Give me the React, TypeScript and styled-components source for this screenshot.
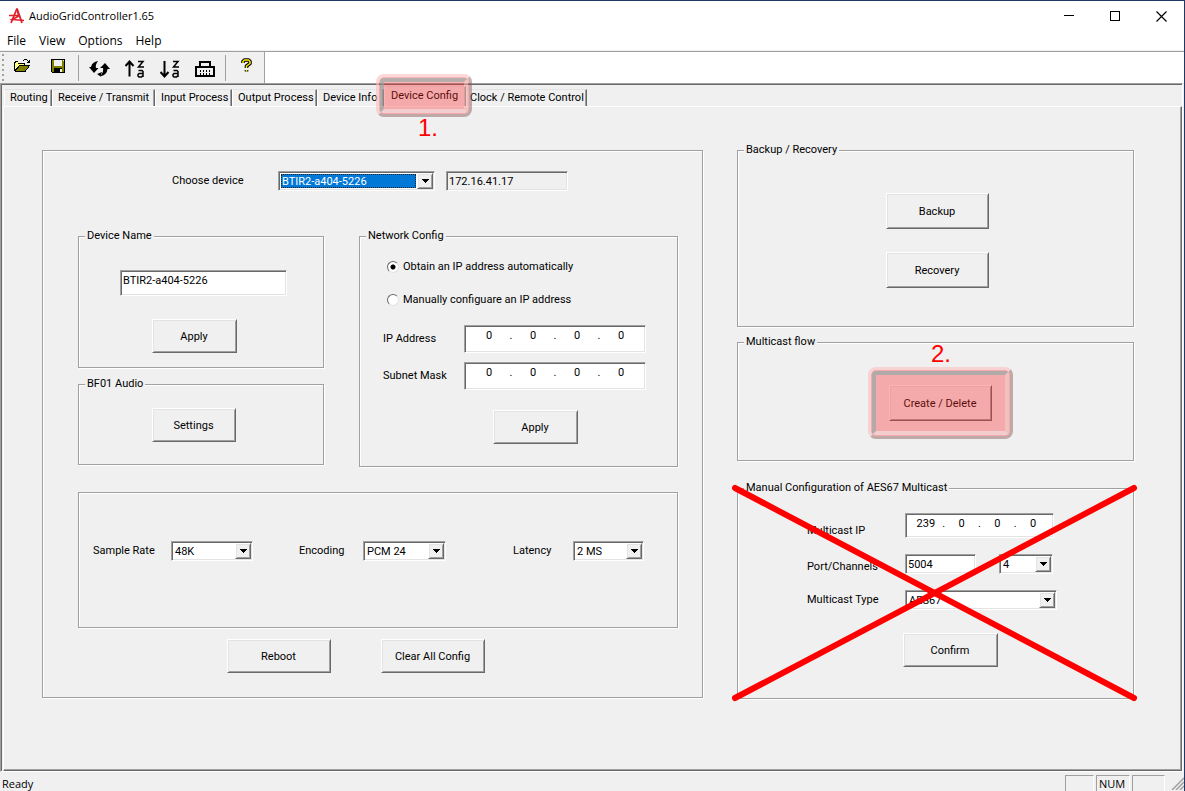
import React from "react";
import styled, { createGlobalStyle, css } from "styled-components";

const FACE = "#f0f0f0";
const SHADOW = "#a0a0a0";
const DARK = "#696969";
const LIGHT = "#e3e3e3";

const GlobalStyle = createGlobalStyle`
  *, *::before, *::after { box-sizing: border-box; }
  body {
    margin: 0;
    background: ${FACE};
    color: #000;
    font: 11px/14px Roboto, "Liberation Sans", Arial, sans-serif;
  }
  button, input, select { font: inherit; color: inherit; margin: 0; }
`;

const raised = css`
  border: 1px solid;
  border-color: #fff ${DARK} ${DARK} #fff;
  box-shadow: inset 1px 1px 0 ${LIGHT}, inset -1px -1px 0 ${SHADOW};
`;

const sunken = css`
  border: 1px solid;
  border-color: ${SHADOW} #fff #fff ${SHADOW};
  box-shadow: inset 1px 1px 0 ${DARK}, inset -1px -1px 0 ${LIGHT};
`;

const etched = css`
  border: 1px solid ${SHADOW};
  box-shadow: inset 1px 1px 0 #fff, 1px 1px 0 #fff;
`;

/* ---------- window chrome ---------- */

const Window = styled.div`
  display: flex;
  flex-direction: column;
  min-height: 100vh;
  border-top: 1px solid #1f3864;
  border-right: 1px solid #1f3864;
  background: ${FACE};
`;

const TitleBar = styled.header`
  display: flex;
  align-items: center;
  height: 30px;
  padding-left: 8px;
  background: #fff;
  font: 11px/16px "Open Sans", "Noto Sans", sans-serif;
`;

const Title = styled.h1`
  flex: 1;
  margin: 0 0 0 4px;
  font: inherit;
`;

const CaptionButton = styled.button`
  display: grid;
  place-items: center;
  width: 46px;
  height: 30px;
  padding: 0;
  border: 0;
  background: none;
`;

const MenuBar = styled.nav`
  display: flex;
  height: 20px;
  background: #fff;
  border-bottom: 1px solid ${FACE};
  font: 12px/20px "Open Sans", "Noto Sans", sans-serif;
`;

const MenuItem = styled.button`
  padding: 0 6px 0 7px;
  border: 0;
  background: none;
`;

const ToolBarRow = styled.div`
  display: flex;
  height: 32px;
  background: #fff;
  border-top: 1px solid ${SHADOW};
`;

const ToolBar = styled.div`
  display: flex;
  align-items: center;
  padding: 0 0 0 2px;
  background: ${FACE};
  border-right: 1px solid ${SHADOW};
`;

const Grip = styled.span`
  width: 2px;
  height: 28px;
  margin-right: 1px;
  background: repeating-linear-gradient(${SHADOW} 0 2px, transparent 2px 5px);
`;

const ToolButton = styled.button`
  display: grid;
  place-items: center;
  width: 35px;
  height: 28px;
  padding: 0 0 4px;
  border: 0;
  background: none;
`;

const WideTool = styled(ToolButton)`
  padding: 2px 0 0;
`;

const Separator = styled.span`
  width: 1px;
  height: 26px;
  margin: 0 3px;
  background: ${SHADOW};
`;

/* ---------- tabs ---------- */

const Client = styled.main`
  flex: 1;
  display: flex;
  flex-direction: column;
  border: 1px solid;
  border-color: ${SHADOW} #fff #fff ${SHADOW};
  box-shadow: inset 1px 1px 0 ${DARK};
  padding: 2px 0 0 2px;
  margin-right: 1px;
`;

const TabStrip = styled.div`
  display: flex;
  align-items: flex-end;
  height: 20px;
  padding-left: 1px;
`;

const Tab = styled.button<{ $w: number; $on?: boolean }>`
  position: relative;
  width: ${(p) => p.$w}px;
  height: ${(p) => (p.$on ? 20 : 17)}px;
  padding: ${(p) => (p.$on ? "0 0 2px 6px" : "0 0 0 5px")};
  border: 0;
  border-left: 1px solid #fff;
  border-top: 1px solid ${LIGHT};
  border-right: 1px solid ${DARK};
  box-shadow: inset -1px 0 0 ${SHADOW};
  background: ${FACE};
  text-align: left;
  white-space: nowrap;
`;

const LastTab = styled(Tab)`
  padding-left: 3px;
`;

const Page = styled.section`
  flex: 1;
  display: grid;
  grid-template-columns: 661fr 397fr;
  align-items: start;
  gap: 34px;
  padding: 36px 47px 60px 38px;
  border: 1px solid;
  border-color: #fff ${DARK} ${DARK} #fff;
  box-shadow: inset -1px -1px 0 ${SHADOW};
`;

const Column = styled.div<{ $gap?: number }>`
  display: flex;
  flex-direction: column;
  gap: ${(p) => p.$gap ?? 0}px;
`;

const DevicePanel = styled.div`
  ${etched}
  margin-top: 7px;
  padding: 20px 24px 24px 35px;
`;

const DeviceGroups = styled.div`
  display: grid;
  grid-template-columns: 246fr 319fr;
  align-items: start;
  gap: 35px;
  margin-top: 38px;
`;

const Group = styled.fieldset<{ $top?: number }>`
  ${etched}
  min-width: 0;
  margin: ${(p) => p.$top ?? 0}px 0 0;
  padding: 0;
`;

const GroupBody = styled.div<{ $pad: string; $center?: boolean }>`
  display: flex;
  flex-direction: column;
  align-items: ${(p) => (p.$center ? "center" : "flex-start")};
  padding: ${(p) => p.$pad};
`;

const Legend = styled.legend`
  margin-left: 6px;
  padding: 0 2px;
  background: ${FACE};
  line-height: 14px;
`;

const AudioPanel = styled.div`
  ${etched}
  display: flex;
  align-items: flex-start;
  height: 136px;
  margin: 25px 0 11px;
  padding: 48px 0 0 14px;
`;

const Row = styled.div<{ $top?: number; $left?: number; $gap?: number; $align?: string }>`
  display: flex;
  align-items: ${(p) => p.$align ?? "center"};
  gap: ${(p) => p.$gap ?? 0}px;
  margin: ${(p) => p.$top ?? 0}px 0 0 ${(p) => p.$left ?? 0}px;
`;

const Label = styled.label<{ $w: number }>`
  width: ${(p) => p.$w}px;
  white-space: nowrap;
`;

/* ---------- controls ---------- */

const PushButton = styled.button<{ $w: number; $h?: number }>`
  ${raised}
  width: ${(p) => p.$w}px;
  height: ${(p) => p.$h ?? 34}px;
  padding: 2px 1px 0 0;
  background: ${FACE};
`;

const TextBox = styled.input<{ $w: number; $h: number }>`
  ${sunken}
  width: ${(p) => p.$w}px;
  height: ${(p) => p.$h}px;
  padding: ${(p) => (p.$h > 20 ? "0 2px 5px" : "0 2px")};
  border-radius: 0;
  background: ${(p) => (p.readOnly ? FACE : "#fff")};
`;

const ComboFrame = styled.span<{ $w: number }>`
  ${sunken}
  position: relative;
  display: inline-flex;
  width: ${(p) => p.$w}px;
  height: 20px;
  padding: 1px;
  background: #fff;
`;

const ComboSelect = styled.select<{ $hot?: boolean }>`
  appearance: none;
  flex: 1;
  margin: 1px 17px 1px 1px;
  padding: ${(p) => (p.$hot ? "0" : "0 1px")};
  border: ${(p) => (p.$hot ? "1px dotted #202020" : "0")};
  border-radius: 0;
  outline: 0;
  line-height: 13px;
  background: ${(p) => (p.$hot ? "#0078d7" : "#fff")};
  color: ${(p) => (p.$hot ? "#fff" : "#000")};
`;

const ComboArrow = styled.span`
  ${raised}
  position: absolute;
  top: 1px;
  right: 1px;
  bottom: 1px;
  width: 16px;
  display: grid;
  place-items: center;
  background: ${FACE};
  pointer-events: none;
`;

const IpFrame = styled.div<{ $w: number; $h: number }>`
  ${sunken}
  display: flex;
  width: ${(p) => p.$w}px;
  height: ${(p) => p.$h}px;
  padding: 3px 4px 0;
  background: #fff;
`;

const IpPart = styled.input`
  flex: 1;
  min-width: 0;
  height: 14px;
  padding: 0;
  border: 0;
  background: none;
  text-align: center;
`;

const IpDot = styled.span`
  width: 4px;
  text-align: center;
`;

const Radio = styled.input`
  appearance: none;
  width: 12px;
  height: 12px;
  margin: 0 4px 0 0;
  border: 1px solid;
  border-color: ${DARK} ${LIGHT} ${LIGHT} ${DARK};
  border-radius: 50%;
  background: #fff;
  &:checked {
    background: radial-gradient(circle, #000 0 2px, #fff 3px);
  }
`;

const RadioLabel = styled.label`
  display: flex;
  align-items: center;
  white-space: nowrap;
`;

/* ---------- annotations ---------- */

const Anchor = styled.div<{ $top?: number }>`
  position: relative;
  margin-top: ${(p) => p.$top ?? 0}px;
`;

const Highlight = styled.span<{ $inset: string }>`
  position: absolute;
  z-index: 1;
  inset: ${(p) => p.$inset};
  border: 3px solid;
  border-color: rgba(250, 190, 190, 0.6) rgba(130, 80, 80, 0.45) rgba(130, 80, 80, 0.45)
    rgba(250, 190, 190, 0.6);
  border-radius: 8px;
  background: rgba(252, 40, 40, 0.35);
  background-clip: padding-box;
  pointer-events: none;
  &::before {
    content: "";
    position: absolute;
    inset: 1px;
    border: 4px solid;
    border-color: rgba(135, 170, 170, 0.6) rgba(242, 225, 225, 0.4) rgba(242, 225, 225, 0.65)
      rgba(135, 170, 170, 0.6);
    border-radius: 4px;
  }
`;

const Step = styled.span<{ $x: number; $y: number }>`
  position: absolute;
  z-index: 2;
  left: ${(p) => p.$x}px;
  top: ${(p) => p.$y}px;
  color: #f00;
  font: 24px/24px "Liberation Sans", Arial, sans-serif;
`;

const CrossOut = styled.svg`
  position: absolute;
  top: 7px;
  left: -2px;
  width: calc(100% + 2px);
  height: calc(100% - 8px);
  overflow: visible;
  pointer-events: none;
`;

/* ---------- status bar ---------- */

const StatusBar = styled.footer`
  display: flex;
  align-items: flex-start;
  gap: 2px;
  height: 19px;
  padding: 3px 0 0 2px;
  font: 11px/15px "Open Sans", "Noto Sans", sans-serif;
`;

const StatusText = styled.span`
  flex: 1;
  padding-top: 1px;
`;

const StatusCell = styled.span<{ $w: number }>`
  width: ${(p) => p.$w}px;
  height: 16px;
  padding-left: 2px;
  border: 1px solid;
  border-color: ${SHADOW} #fff #fff ${SHADOW};
  border-bottom: 0;
`;

/* ---------- drawings ---------- */

const Logo = () => (
  <svg width="17" height="16" viewBox="0 0 17 16" fill="none" stroke="#e0202c">
    <path d="M9 0.5L3 15M9 0.5L14 15" strokeWidth="1.8" />
    <path d="M1 7.500H12L4 11.500L16 12.500" strokeWidth="1.5" />
    <path d="M9 2L10.500 7" strokeWidth="1.5" />
  </svg>
);

const OpenIcon = () => (
  <svg width="17" height="14" viewBox="0 0 17 14" shapeRendering="crispEdges">
    <path d="M1 3h3l1 1h5v3H5l-4 5z" fill="#ffff80" />
    <path d="M5 7h10l-4 5H1z" fill="#808000" />
    <path d="M1 12.5h10M.5 3v9M1 3.500V2.500h3M4 4.500h6.500V7M5 6.500h11M15 7.500l-4 5M5 7.500l-4 4" fill="none" stroke="#000" />
    <path d="M9 1.500h1M10 .5h3M13 1.500h1M14 2.500h1M13 3.500h3M15.500 1v3" fill="none" stroke="#000" />
  </svg>
);

const SaveIcon = () => (
  <svg width="14" height="14" viewBox="0 0 14 14" shapeRendering="crispEdges">
    <path d="M0 0h14v14H1L0 13z" fill="#000" />
    <path d="M1 1h2v6h8V1h2v12h-2V9H3v4H1z" fill="#808000" />
    <path d="M3 1h8v6H3z" fill={FACE} />
    <path d="M9 10h2v3H9zM12 1h1v1h-1z" fill={FACE} />
  </svg>
);

const SyncIcon = () => (
  <svg width="21" height="16" viewBox="0 0 21 16">
    <path d="M9 0Q3 1 2 6H0l5 6 4.500-5H7Q6 4 9 0z" />
    <path d="M11 15.500Q18 14 18.500 8H21l-5-6-5 5h3Q15 11 11 15.500z" />
    <path d="M8 13l5-2-1.500 4.500z" />
  </svg>
);

const SortIcon = ({ down = false }: { down?: boolean }) => (
  <svg width="20" height="18" viewBox="0 0 20 18" fill="none" stroke="#000">
    {down ? (
      <path d="M4.500 1v15M.5 12l4 4.500 4-4.500" strokeWidth="2" />
    ) : (
      <path d="M4.500 16.500V2M.5 6l4-4.500 4 4.500" strokeWidth="2" />
    )}
    <path d="M13 1.500h5L13.500 7H19" strokeWidth="1.500" />
    <path d="M13.500 10.500h3.500l1 1V17M18 13.500h-4l-1 1v1.500l1 1h2.500l1.500-1.500" strokeWidth="1.500" />
  </svg>
);

const KeypadIcon = () => (
  <svg width="20" height="16" viewBox="0 0 20 16" fill="none" stroke="#000" shapeRendering="crispEdges">
    <path d="M1 6h18v9H1zM5 6V1h10v5" strokeWidth="2" />
    <path d="M5.500 9v2M5.500 12v2M8.500 9v2M8.500 12v2M11.500 9v2M11.500 12v2M14.500 9v2M14.500 12v2" />
  </svg>
);

const HelpIcon = () => (
  <svg width="11" height="15" viewBox="0 0 11 15" fill="none" strokeLinejoin="round">
    <path d="M2 5V3.500L3.500 2h4L9 3.500v2L5.500 8v2M5.500 12v1.500" stroke="#000" strokeWidth="3.600" />
    <path d="M2 5V3.500L3.500 2h4L9 3.500v2L5.500 8v2M5.500 12v1.500" stroke="#ffee00" strokeWidth="1.500" />
  </svg>
);

const MinimizeIcon = () => (
  <svg width="10" height="10" shapeRendering="crispEdges"><path d="M0 4.500h10" stroke="#000" /></svg>
);
const MaximizeIcon = () => (
  <svg width="10" height="10" shapeRendering="crispEdges"><path d="M.5.5h9v9h-9z" stroke="#000" fill="none" /></svg>
);
const CloseIcon = () => (
  <svg width="11" height="11"><path d="M.5.5l10 10M10.500.5l-10 10" stroke="#000" strokeWidth="1.200" /></svg>
);

const SizeGrip = () => (
  <svg width="17" height="15" viewBox="0 0 17 15" stroke={SHADOW} strokeWidth="1.500">
    <path d="M5 15L17 3M9 15l8-8M13 15l4-4" />
  </svg>
);

/* ---------- composed parts ---------- */

type ComboProps = { id: string; width: number; options: string[]; hot?: boolean; label?: string };

const Combo = ({ id, width, options, hot, label }: ComboProps) => (
  <ComboFrame $w={width}>
    <ComboSelect id={id} $hot={hot} aria-label={label}>
      {options.map((o) => (
        <option key={o}>{o}</option>
      ))}
    </ComboSelect>
    <ComboArrow>
      <svg width="7" height="4" shapeRendering="crispEdges"><path d="M0 0h7L3.500 4z" /></svg>
    </ComboArrow>
  </ComboFrame>
);

type IpProps = { id: string; width: number; height: number; parts: string[] };

const IpField = ({ id, width, height, parts }: IpProps) => (
  <IpFrame $w={width} $h={height}>
    {parts.map((part, i) => (
      <React.Fragment key={i}>
        {i > 0 && <IpDot>.</IpDot>}
        <IpPart id={i === 0 ? id : undefined} defaultValue={part} aria-label={i === 0 ? undefined : `${id} part ${i + 1}`} />
      </React.Fragment>
    ))}
  </IpFrame>
);

const TABS_BEFORE: [string, number][] = [
  ["Routing", 48],
  ["Receive / Transmit", 103],
  ["Input Process", 77],
  ["Output Process", 85],
  ["Device Info", 67],
];

export default function App() {
  return (
    <Window>
      <GlobalStyle />
      <TitleBar>
        <Logo />
        <Title>AudioGridController1.65</Title>
        <CaptionButton aria-label="Minimize"><MinimizeIcon /></CaptionButton>
        <CaptionButton aria-label="Maximize"><MaximizeIcon /></CaptionButton>
        <CaptionButton aria-label="Close"><CloseIcon /></CaptionButton>
      </TitleBar>
      <MenuBar>
        {["File", "View", "Options", "Help"].map((m) => (
          <MenuItem key={m}>{m}</MenuItem>
        ))}
      </MenuBar>
      <ToolBarRow>
        <ToolBar>
          <Grip />
          <ToolButton aria-label="Open"><OpenIcon /></ToolButton>
          <ToolButton aria-label="Save"><SaveIcon /></ToolButton>
          <Separator />
          <WideTool aria-label="Refresh"><SyncIcon /></WideTool>
          <WideTool aria-label="Sort ascending"><SortIcon /></WideTool>
          <WideTool aria-label="Sort descending"><SortIcon down /></WideTool>
          <WideTool aria-label="Devices"><KeypadIcon /></WideTool>
          <Separator />
          <ToolButton aria-label="Help"><HelpIcon /></ToolButton>
        </ToolBar>
      </ToolBarRow>

      <Client>
        <TabStrip role="tablist">
          {TABS_BEFORE.map(([name, w]) => (
            <Tab key={name} role="tab" $w={w}>{name}</Tab>
          ))}
          <Tab role="tab" aria-selected $w={82} $on>
            Device Config
            <Highlight $inset="-13px -7px -11px -9px" />
            <Step $x={33} $y={29}>1.</Step>
          </Tab>
          <LastTab role="tab" $w={121}>Clock / Remote Control</LastTab>
        </TabStrip>

        <Page>
          <DevicePanel>
            <Row $left={94}>
              <Label $w={106} htmlFor="device">Choose device</Label>
              <Combo id="device" width={157} options={["BTIR2-a404-5226"]} hot />
              <Row $left={11}>
                <TextBox $w={122} $h={20} readOnly value="172.16.41.17" aria-label="Device address" />
              </Row>
            </Row>

            <DeviceGroups>
              <Column $gap={9}>
                <Group>
                  <Legend>Device Name</Legend>
                  <GroupBody $pad="27px 0 14px 41px">
                    <TextBox $w={167} $h={26} defaultValue="BTIR2-a404-5226" aria-label="Device Name" />
                    <Row $top={23} $left={32}>
                      <PushButton $w={85}>Apply</PushButton>
                    </Row>
                  </GroupBody>
                </Group>
                <Group>
                  <Legend>BF01 Audio</Legend>
                  <GroupBody $pad="17px 0 22px 73px">
                    <PushButton $w={84}>Settings</PushButton>
                  </GroupBody>
                </Group>
              </Column>
              <Group>
                <Legend>Network Config</Legend>
                <GroupBody $pad="17px 0 22px 23px">
                  <Row $left={4}>
                    <RadioLabel>
                      <Radio type="radio" name="mode" defaultChecked />
                      Obtain an IP address automatically
                    </RadioLabel>
                  </Row>
                  <Row $left={4} $top={19}>
                    <RadioLabel>
                      <Radio type="radio" name="mode" />
                      Manually configuare an IP address
                    </RadioLabel>
                  </Row>
                  <Row $top={18}>
                    <Label $w={81} htmlFor="ip">IP Address</Label>
                    <IpField id="ip" width={182} height={28} parts={["0", "0", "0", "0"]} />
                  </Row>
                  <Row $top={9}>
                    <Label $w={81} htmlFor="mask">Subnet Mask</Label>
                    <IpField id="mask" width={182} height={28} parts={["0", "0", "0", "0"]} />
                  </Row>
                  <Row $top={20} $left={110}>
                    <PushButton $w={85}>Apply</PushButton>
                  </Row>
                </GroupBody>
              </Group>
            </DeviceGroups>

            <AudioPanel>
              <Row>
                <Label $w={78} htmlFor="rate">Sample Rate</Label>
                <Combo id="rate" width={82} options={["48K"]} />
              </Row>
              <Row $left={46}>
                <Label $w={64} htmlFor="encoding">Encoding</Label>
                <Combo id="encoding" width={83} options={["PCM 24"]} />
              </Row>
              <Row $left={67}>
                <Label $w={60} htmlFor="latency">Latency</Label>
                <Combo id="latency" width={71} options={["2 MS"]} />
              </Row>
            </AudioPanel>

            <Row $left={149} $gap={50}>
              <PushButton $w={104}>Reboot</PushButton>
              <PushButton $w={104}>Clear All Config</PushButton>
            </Row>
          </DevicePanel>

          <Column>
            <Group>
              <Legend>Backup / Recovery</Legend>
              <GroupBody $pad="36px 0 38px 4px" $center>
                <PushButton $w={103} $h={36}>Backup</PushButton>
                <Row $top={23}>
                  <PushButton $w={103} $h={36}>Recovery</PushButton>
                </Row>
              </GroupBody>
            </Group>
            <Group $top={8}>
              <Legend>Multicast flow</Legend>
              <GroupBody $pad="36px 0 39px 10px" $center>
                <Anchor>
                  <PushButton $w={103} $h={36}>Create / Delete</PushButton>
                  <Highlight $inset="-18px -21px" />
                  <Step $x={42} $y={-43}>2.</Step>
                </Anchor>
              </GroupBody>
            </Group>
            <Anchor $top={20}>
              <Group>
                <Legend>Manual Configuration of AES67 Multicast</Legend>
                <GroupBody $pad="18px 0 31px 69px">
                  <Row $align="flex-end">
                    <Label $w={98} htmlFor="mip">Multicast IP</Label>
                    <IpField id="mip" width={149} height={25} parts={["239", "0", "0", "0"]} />
                  </Row>
                  <Row $top={16} $align="flex-end">
                    <Label $w={98} htmlFor="port">Port/Channels</Label>
                    <TextBox id="port" $w={71} $h={20} defaultValue="5004" />
                    <Row $left={23}>
                      <Combo id="channels" width={54} options={["4"]} label="Channels" />
                    </Row>
                  </Row>
                  <Row $top={16}>
                    <Label $w={98} htmlFor="mtype">Multicast Type</Label>
                    <Combo id="mtype" width={152} options={["AES67"]} />
                  </Row>
                  <Row $top={23} $left={96}>
                    <PushButton $w={95}>Confirm</PushButton>
                  </Row>
                </GroupBody>
              </Group>
              <CrossOut>
                <g stroke="#f00" strokeWidth="6" strokeLinecap="round">
                  <line x1="0" y1="0" x2="100%" y2="100%" />
                  <line x1="100%" y1="0" x2="0" y2="100%" />
                </g>
              </CrossOut>
            </Anchor>
          </Column>
        </Page>
      </Client>

      <StatusBar>
        <StatusText>Ready</StatusText>
        <StatusCell $w={29} />
        <StatusCell $w={34}>NUM</StatusCell>
        <StatusCell $w={33} />
        <SizeGrip />
      </StatusBar>
    </Window>
  );
}
